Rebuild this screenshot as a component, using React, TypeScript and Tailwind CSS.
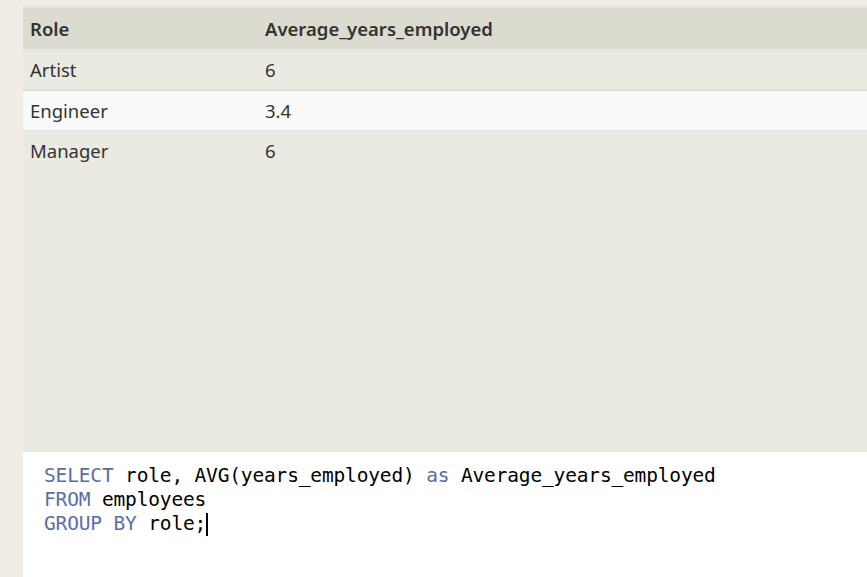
export default function App() {
  const rows = [
    { role: "Artist", avg: "6", bg: "bg-[#eae9e2]", border: "border-b-2 border-[#dfded8]", h: "h-[40px]" },
    { role: "Engineer", avg: "3.4", bg: "bg-[#f9f9f9]", border: "border-b border-[#e0e0dc]", h: "h-[40px]" },
  ];

  return (
    <div className="w-[867px] h-[577px] overflow-hidden bg-[#efede6] pl-[23px] pt-[6px] flex flex-col">
      <div className="flex-1 flex flex-col border-t-2 border-[#e4e2db]">
        {/* result table */}
        <div className="h-[444px] bg-[#eae9e2] text-[#333333] text-[18.5px] font-['Noto_Sans',sans-serif]">
          <div className="h-[43px] bg-[#dbdbd0] border-b-2 border-[#e5e4dd] flex items-center font-semibold">
            <div className="w-[242px] pl-[7px]">Role</div>
            <div>Average_years_employed</div>
          </div>
          {rows.map((r) => (
            <div key={r.role} className={`${r.h} ${r.bg} ${r.border} flex items-center`}>
              <div className="w-[242px] pl-[7px]">{r.role}</div>
              <div>{r.avg}</div>
            </div>
          ))}
          <div className="h-[40px] flex items-center">
            <div className="w-[242px] pl-[7px]">Manager</div>
            <div>6</div>
          </div>
        </div>

        {/* query editor */}
        <div className="flex-1 bg-white pl-[21px] pt-[12px] font-['DejaVu_Sans_Mono',monospace] text-[19.5px] leading-[24px] tracking-[-0.16px] text-black">
          <div>
            <span className="text-[#5a6ea6]">SELECT</span> role, AVG(years_employed){" "}
            <span className="text-[#5a6ea6]">as</span> Average_years_employed
          </div>
          <div>
            <span className="text-[#5a6ea6]">FROM</span> employees
          </div>
          <div className="flex items-center">
            <span>
              <span className="text-[#5a6ea6]">GROUP BY</span> role;
            </span>
            <span className="inline-block w-[2px] h-[23px] bg-black" />
          </div>
        </div>
      </div>
    </div>
  );
}
